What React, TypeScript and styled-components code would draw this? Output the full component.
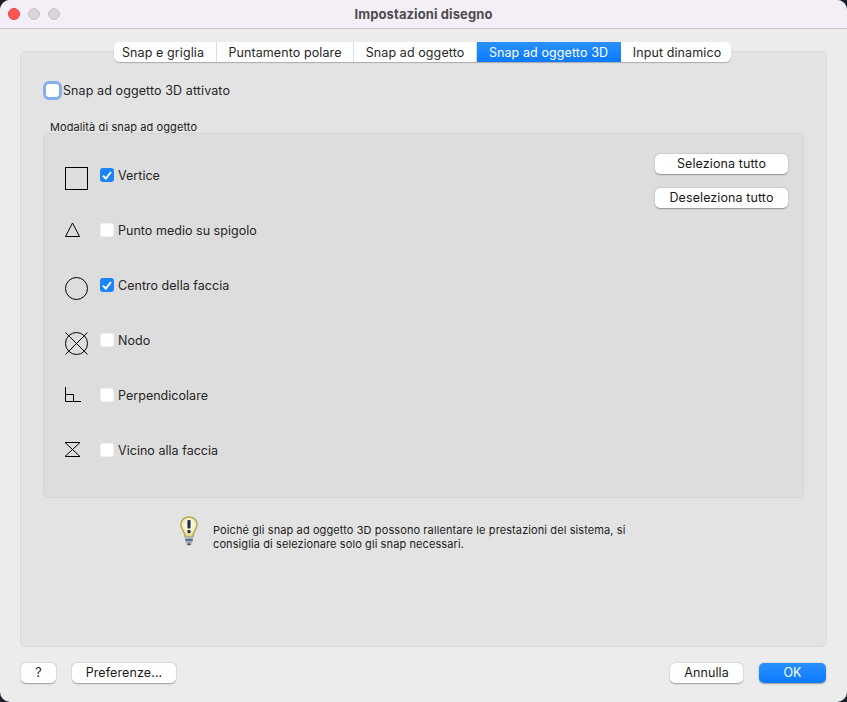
import styled, { createGlobalStyle } from "styled-components";

const GlobalStyle = createGlobalStyle`
  html, body {
    margin: 0;
    padding: 0;
    height: 100%;
    background: #1b1e2c;
    overflow: hidden;
  }
  * {
    box-sizing: border-box;
  }
`;

const TABS = [
  { label: "Snap e griglia", width: 103 },
  { label: "Puntamento polare", width: 137 },
  { label: "Snap ad oggetto", width: 123 },
  { label: "Snap ad oggetto 3D", width: 144, active: true },
  { label: "Input dinamico", width: 110 },
];

function SquareIcon() {
  return (
    <svg width="23" height="23" viewBox="0 0 23 23">
      <rect x="0.5" y="0.5" width="22" height="22" fill="none" stroke="#000" />
    </svg>
  );
}

function TriangleIcon() {
  return (
    <svg width="15" height="15" viewBox="0 0 15 15">
      <path d="M7.5 1 L14.5 14.5 L0.5 14.5 Z" fill="none" stroke="#000" />
    </svg>
  );
}

function CircleIcon() {
  return (
    <svg width="23" height="23" viewBox="0 0 23 23">
      <circle cx="11.5" cy="11.5" r="11" fill="none" stroke="#000" />
    </svg>
  );
}

function NodeIcon() {
  return (
    <svg width="23" height="23" viewBox="0 0 23 23">
      <circle cx="11.5" cy="11.5" r="11" fill="none" stroke="#000" />
      <path d="M0.5 0.5 L22.5 22.5 M22.5 0.5 L0.5 22.5" stroke="#000" />
    </svg>
  );
}

function PerpendicularIcon() {
  return (
    <svg width="16" height="15" viewBox="0 0 16 15">
      <path d="M0.5 0 V14.5 H16 M0.5 7.5 H8.5 V14.5" fill="none" stroke="#000" />
    </svg>
  );
}

function NearestIcon() {
  return (
    <svg width="15" height="15" viewBox="0 0 15 15">
      <path d="M0 0.5 H15 L0 14.5 H15 Z" fill="none" stroke="#000" />
    </svg>
  );
}

function BulbIcon() {
  return (
    <svg width="18" height="30" viewBox="0 0 18 30">
      <defs>
        <radialGradient id="glass" cx="50%" cy="42%" r="58%">
          <stop offset="0%" stopColor="#ffffff" />
          <stop offset="55%" stopColor="#f6f3c8" />
          <stop offset="100%" stopColor="#e3da86" />
        </radialGradient>
      </defs>
      <path
        d="M9 0.9 C4.2 0.9 0.9 4.2 0.9 8.6 C0.9 12.8 4 15 5 19 L5 20.5 L13 20.5 L13 19 C14 15 17.1 12.8 17.1 8.6 C17.1 4.2 13.8 0.9 9 0.9 Z"
        fill="url(#glass)"
        stroke="#b3a957"
        strokeWidth="1.5"
      />
      <rect x="7.4" y="4" width="3.2" height="8.5" rx="1" fill="#26304a" />
      <rect x="7.4" y="14" width="3.2" height="3.2" rx="1" fill="#26304a" />
      <rect x="5" y="20.5" width="8" height="2.2" rx="1" fill="#b6b8c0" />
      <rect x="5" y="22.8" width="8" height="2.2" rx="1" fill="#5f6f9c" />
      <rect x="5.4" y="25" width="7.2" height="2.2" rx="1" fill="#a8aab4" />
      <rect x="7" y="27.2" width="4" height="2" rx="1" fill="#4e5a78" />
    </svg>
  );
}

const SNAP_ROWS = [
  { label: "Vertice", checked: true, Icon: SquareIcon },
  { label: "Punto medio su spigolo", checked: false, Icon: TriangleIcon },
  { label: "Centro della faccia", checked: true, Icon: CircleIcon },
  { label: "Nodo", checked: false, Icon: NodeIcon },
  { label: "Perpendicolare", checked: false, Icon: PerpendicularIcon },
  { label: "Vicino alla faccia", checked: false, Icon: NearestIcon },
];

function CheckMark() {
  return (
    <svg width="10" height="9" viewBox="0 0 10 9">
      <path d="M1 4.6 L3.8 7.6 L9 1" fill="none" stroke="#fff" strokeWidth="2" />
    </svg>
  );
}

export default function App() {
  return (
    <Window>
      <GlobalStyle />
      <TitleBar>
        <Lights>
          <Light $color="#fc5753" $border="#df4744" />
          <Light $color="#d9d5da" $border="#c9c5ca" />
          <Light $color="#d9d5da" $border="#c9c5ca" />
        </Lights>
        <Title>Impostazioni disegno</Title>
      </TitleBar>
      <Body>
        <Tabs>
          {TABS.map((tab) => (
            <Tab key={tab.label} $width={tab.width} $active={tab.active}>
              {tab.label}
            </Tab>
          ))}
        </Tabs>
        <Panel>
          <EnableRow>
            <FocusRing />
            <EnableLabel>Snap ad oggetto 3D attivato</EnableLabel>
          </EnableRow>
          <GroupLabel>Modalità di snap ad oggetto</GroupLabel>
          <Group>
            <SnapList>
              {SNAP_ROWS.map(({ label, checked, Icon }) => (
                <SnapRow key={label}>
                  <IconSlot>
                    <Icon />
                  </IconSlot>
                  <Check $checked={checked}>{checked && <CheckMark />}</Check>
                  <SnapLabel>{label}</SnapLabel>
                </SnapRow>
              ))}
            </SnapList>
            <SideButtons>
              <Button $width={133}>Seleziona tutto</Button>
              <Button $width={133}>Deseleziona tutto</Button>
            </SideButtons>
          </Group>
          <Note>
            <BulbIcon />
            <NoteText>
              Poiché gli snap ad oggetto 3D possono rallentare le prestazioni del sistema, si
              <br />
              consiglia di selezionare solo gli snap necessari.
            </NoteText>
          </Note>
        </Panel>
        <Footer>
          <FooterSide>
            <Button $width={35}>?</Button>
            <Button $width={104}>Preferenze...</Button>
          </FooterSide>
          <FooterSide>
            <Button $width={73}>Annulla</Button>
            <Button $width={67} $primary>
              OK
            </Button>
          </FooterSide>
        </Footer>
      </Body>
    </Window>
  );
}

const Window = styled.div`
  display: flex;
  flex-direction: column;
  width: 847px;
  height: 702px;
  border-radius: 10px;
  overflow: hidden;
  background: #ececec;
  font-family: Inter, "Liberation Sans", sans-serif;
  font-size: 12.5px;
  letter-spacing: 0.1px;
  color: #262626;
`;

const TitleBar = styled.div`
  position: relative;
  display: flex;
  align-items: center;
  justify-content: center;
  flex: none;
  height: 29px;
  background: #f4eff6;
  border-bottom: 1px solid #c6c4c7;
`;

const Lights = styled.div`
  position: absolute;
  left: 8px;
  top: 8px;
  display: flex;
  gap: 8px;
`;

const Light = styled.span<{ $color: string; $border: string }>`
  width: 12px;
  height: 12px;
  border-radius: 50%;
  background: ${(props) => props.$color};
  border: 1px solid ${(props) => props.$border};
`;

const Title = styled.div`
  font-size: 13px;
  font-weight: 700;
  color: #4d4b50;
`;

const Body = styled.div`
  display: flex;
  flex-direction: column;
  flex: 1;
  padding: 13px 20px 0;
`;

const Tabs = styled.div`
  position: relative;
  z-index: 1;
  display: flex;
  align-self: flex-start;
  height: 20px;
  margin-left: 94px;
  background: #fff;
  border-radius: 6px;
  box-shadow: 0 1px 1px rgba(0, 0, 0, 0.25);
  overflow: hidden;
`;

const Tab = styled.div<{ $width: number; $active?: boolean }>`
  display: flex;
  align-items: center;
  justify-content: center;
  width: ${(props) => props.$width}px;
  color: ${(props) => (props.$active ? "#fff" : "#262626")};
  background: ${(props) =>
    props.$active ? "linear-gradient(#2a90fd, #0a7aff)" : "#fff"};
  border-right: 1px solid ${(props) => (props.$active ? "transparent" : "#dcdcdc")};
  white-space: nowrap;

  &:first-child {
    padding-right: 4px;
  }

  &:last-child {
    padding-left: 2px;
    border-right: 0;
  }
`;

const Panel = styled.div`
  display: flex;
  flex-direction: column;
  height: 596px;
  margin-top: -11px;
  padding: 28px 22px 0;
  background: #e3e3e3;
  border: 1px solid #dadada;
  border-radius: 5px;
`;

const EnableRow = styled.div`
  display: flex;
  align-items: center;
  height: 20px;
`;

const FocusRing = styled.div`
  flex: none;
  width: 19px;
  height: 19px;
  border: 3px solid #85afeb;
  border-radius: 6px;
  background: #fff;
  background-clip: padding-box;
`;

const EnableLabel = styled.span`
  margin-left: 1px;
`;

const GroupLabel = styled.div`
  margin: 19px 0 0 7px;
  height: 15px;
  line-height: 16px;
  font-size: 11px;
  color: #1c1c1c;
`;

const Group = styled.div`
  display: flex;
  justify-content: space-between;
  width: 761px;
  height: 365px;
  margin-top: -1px;
  padding: 20px 15px 0 21px;
  background: #dddddd;
  border: 1px solid #d5d5d5;
  border-radius: 5px;
`;

const SnapList = styled.div`
  display: flex;
  flex-direction: column;
  margin-top: 13px;
`;

const SnapRow = styled.div`
  display: flex;
  align-items: flex-start;
  height: 55px;
`;

const IconSlot = styled.div`
  display: flex;
  width: 35px;

  svg {
    display: block;
  }
`;

const Check = styled.div<{ $checked?: boolean }>`
  display: flex;
  align-items: center;
  justify-content: center;
  flex: none;
  width: 14px;
  height: 14px;
  margin-top: 1px;
  border-radius: 3px;
  background: ${(props) => (props.$checked ? "#1a84fb" : "#fff")};
  box-shadow: ${(props) =>
    props.$checked ? "none" : "inset 0 0 0 0.5px rgba(0, 0, 0, 0.1)"};
`;

const SnapLabel = styled.span`
  margin: 1px 0 0 4px;
  line-height: 16px;
  letter-spacing: 0.03px;
`;

const SideButtons = styled.div`
  display: flex;
  flex-direction: column;
  gap: 14px;
`;

const Button = styled.button<{ $width: number; $primary?: boolean }>`
  width: ${(props) => props.$width}px;
  height: 20px;
  padding: 0 0 2px;
  border: 0;
  border-radius: 5px;
  font-family: inherit;
  font-size: 12.5px;
  letter-spacing: inherit;
  color: ${(props) => (props.$primary ? "#fff" : "#1a1a1a")};
  background: ${(props) =>
    props.$primary ? "linear-gradient(#2a90fd, #0a7aff)" : "#fff"};
  box-shadow: 0 0.5px 1.5px rgba(0, 0, 0, 0.35);
`;

const Note = styled.div`
  display: flex;
  align-items: flex-start;
  gap: 15px;
  margin: 18px 0 0 137px;
`;

const NoteText = styled.p`
  margin: 7px 0 0;
  font-size: 11px;
  line-height: 14px;
  color: #1c1c1c;
  white-space: nowrap;
`;

const Footer = styled.div`
  display: flex;
  justify-content: space-between;
  margin-top: 16px;
  padding: 0 1px;
`;

const FooterSide = styled.div`
  display: flex;
  gap: 16px;
`;
